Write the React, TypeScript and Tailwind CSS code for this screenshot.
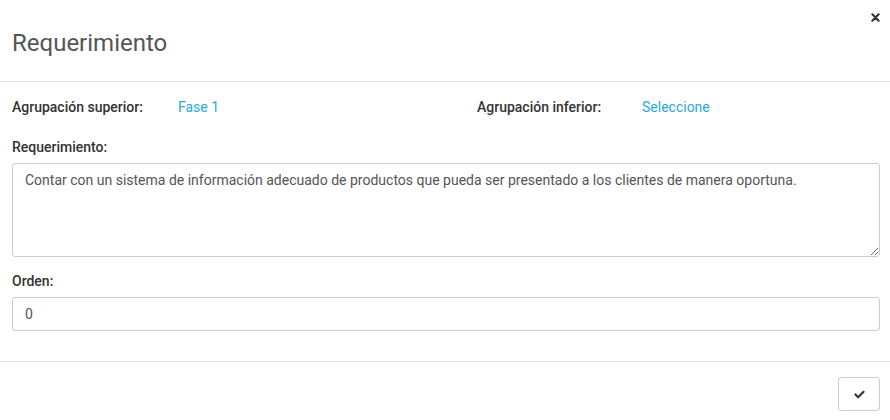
import { useState } from "react";

export default function App() {
  const [texto, setTexto] = useState(
    "Contar con un sistema de información adecuado de productos que pueda ser presentado a los clientes de manera oportuna."
  );
  const [orden, setOrden] = useState("0");

  return (
    <div className="relative h-[420px] w-[890px] bg-white font-['Roboto',sans-serif] text-[#333]">
      <button
        type="button"
        className="absolute right-[8px] top-[10px] grid h-[14px] w-[14px] place-items-center text-[#333]"
        aria-label="Cerrar"
      >
        <svg viewBox="0 0 10 10" className="h-[9px] w-[9px]">
          <path d="M1.5 1.5 L8.5 8.5 M8.5 1.5 L1.5 8.5" stroke="currentColor" strokeWidth="2.4" strokeLinecap="round" />
        </svg>
      </button>

      <div className="border-b border-[#e5e5e5] pb-[24px] pl-3 pt-[30px]">
        <h2 className="text-[24px] leading-[27px] text-[#555]">Requerimiento</h2>
      </div>

      <div className="pb-[30px] pl-3 pr-[10px] pt-[15px]">
        <div className="flex text-sm leading-5">
          <span className="w-[166px] font-medium">Agrupación superior:</span>
          <a className="w-[299px] text-[#2aa8dc]">Fase 1</a>
          <span className="w-[165px] font-medium">Agrupación inferior:</span>
          <a className="text-[#2aa8dc]">Seleccione</a>
        </div>

        <label className="mt-5 block">
          <span className="block text-sm font-medium leading-5">Requerimiento:</span>
          <textarea
            value={texto}
            onChange={(e) => setTexto(e.target.value)}
            className="mt-[6px] block h-[94px] w-full resize-y rounded-[3px] border border-[#ccc] px-3 py-[6px] text-sm leading-5 text-[#555] outline-none"
          />
        </label>

        <label className="mt-[14px] block">
          <span className="block text-sm font-medium leading-5">Orden:</span>
          <input
            value={orden}
            onChange={(e) => setOrden(e.target.value)}
            className="mt-[6px] block h-[34px] w-full rounded-[3px] border border-[#ccc] px-3 text-sm text-[#555] outline-none"
          />
        </label>
      </div>

      <div className="flex justify-end border-t border-[#e5e5e5] pr-[10px] pt-[15px]">
        <button
          type="button"
          className="grid h-[34px] w-[42px] place-items-center rounded-[3px] border border-[#ccc] bg-white text-[#333]"
          aria-label="Guardar"
        >
          <svg viewBox="0 0 12 10" className="h-[9px] w-[11px]">
            <path d="M1.5 5 L4.5 8 L10.5 2" fill="none" stroke="currentColor" strokeWidth="2.4" strokeLinecap="round" strokeLinejoin="round" />
          </svg>
        </button>
      </div>
    </div>
  );
}
